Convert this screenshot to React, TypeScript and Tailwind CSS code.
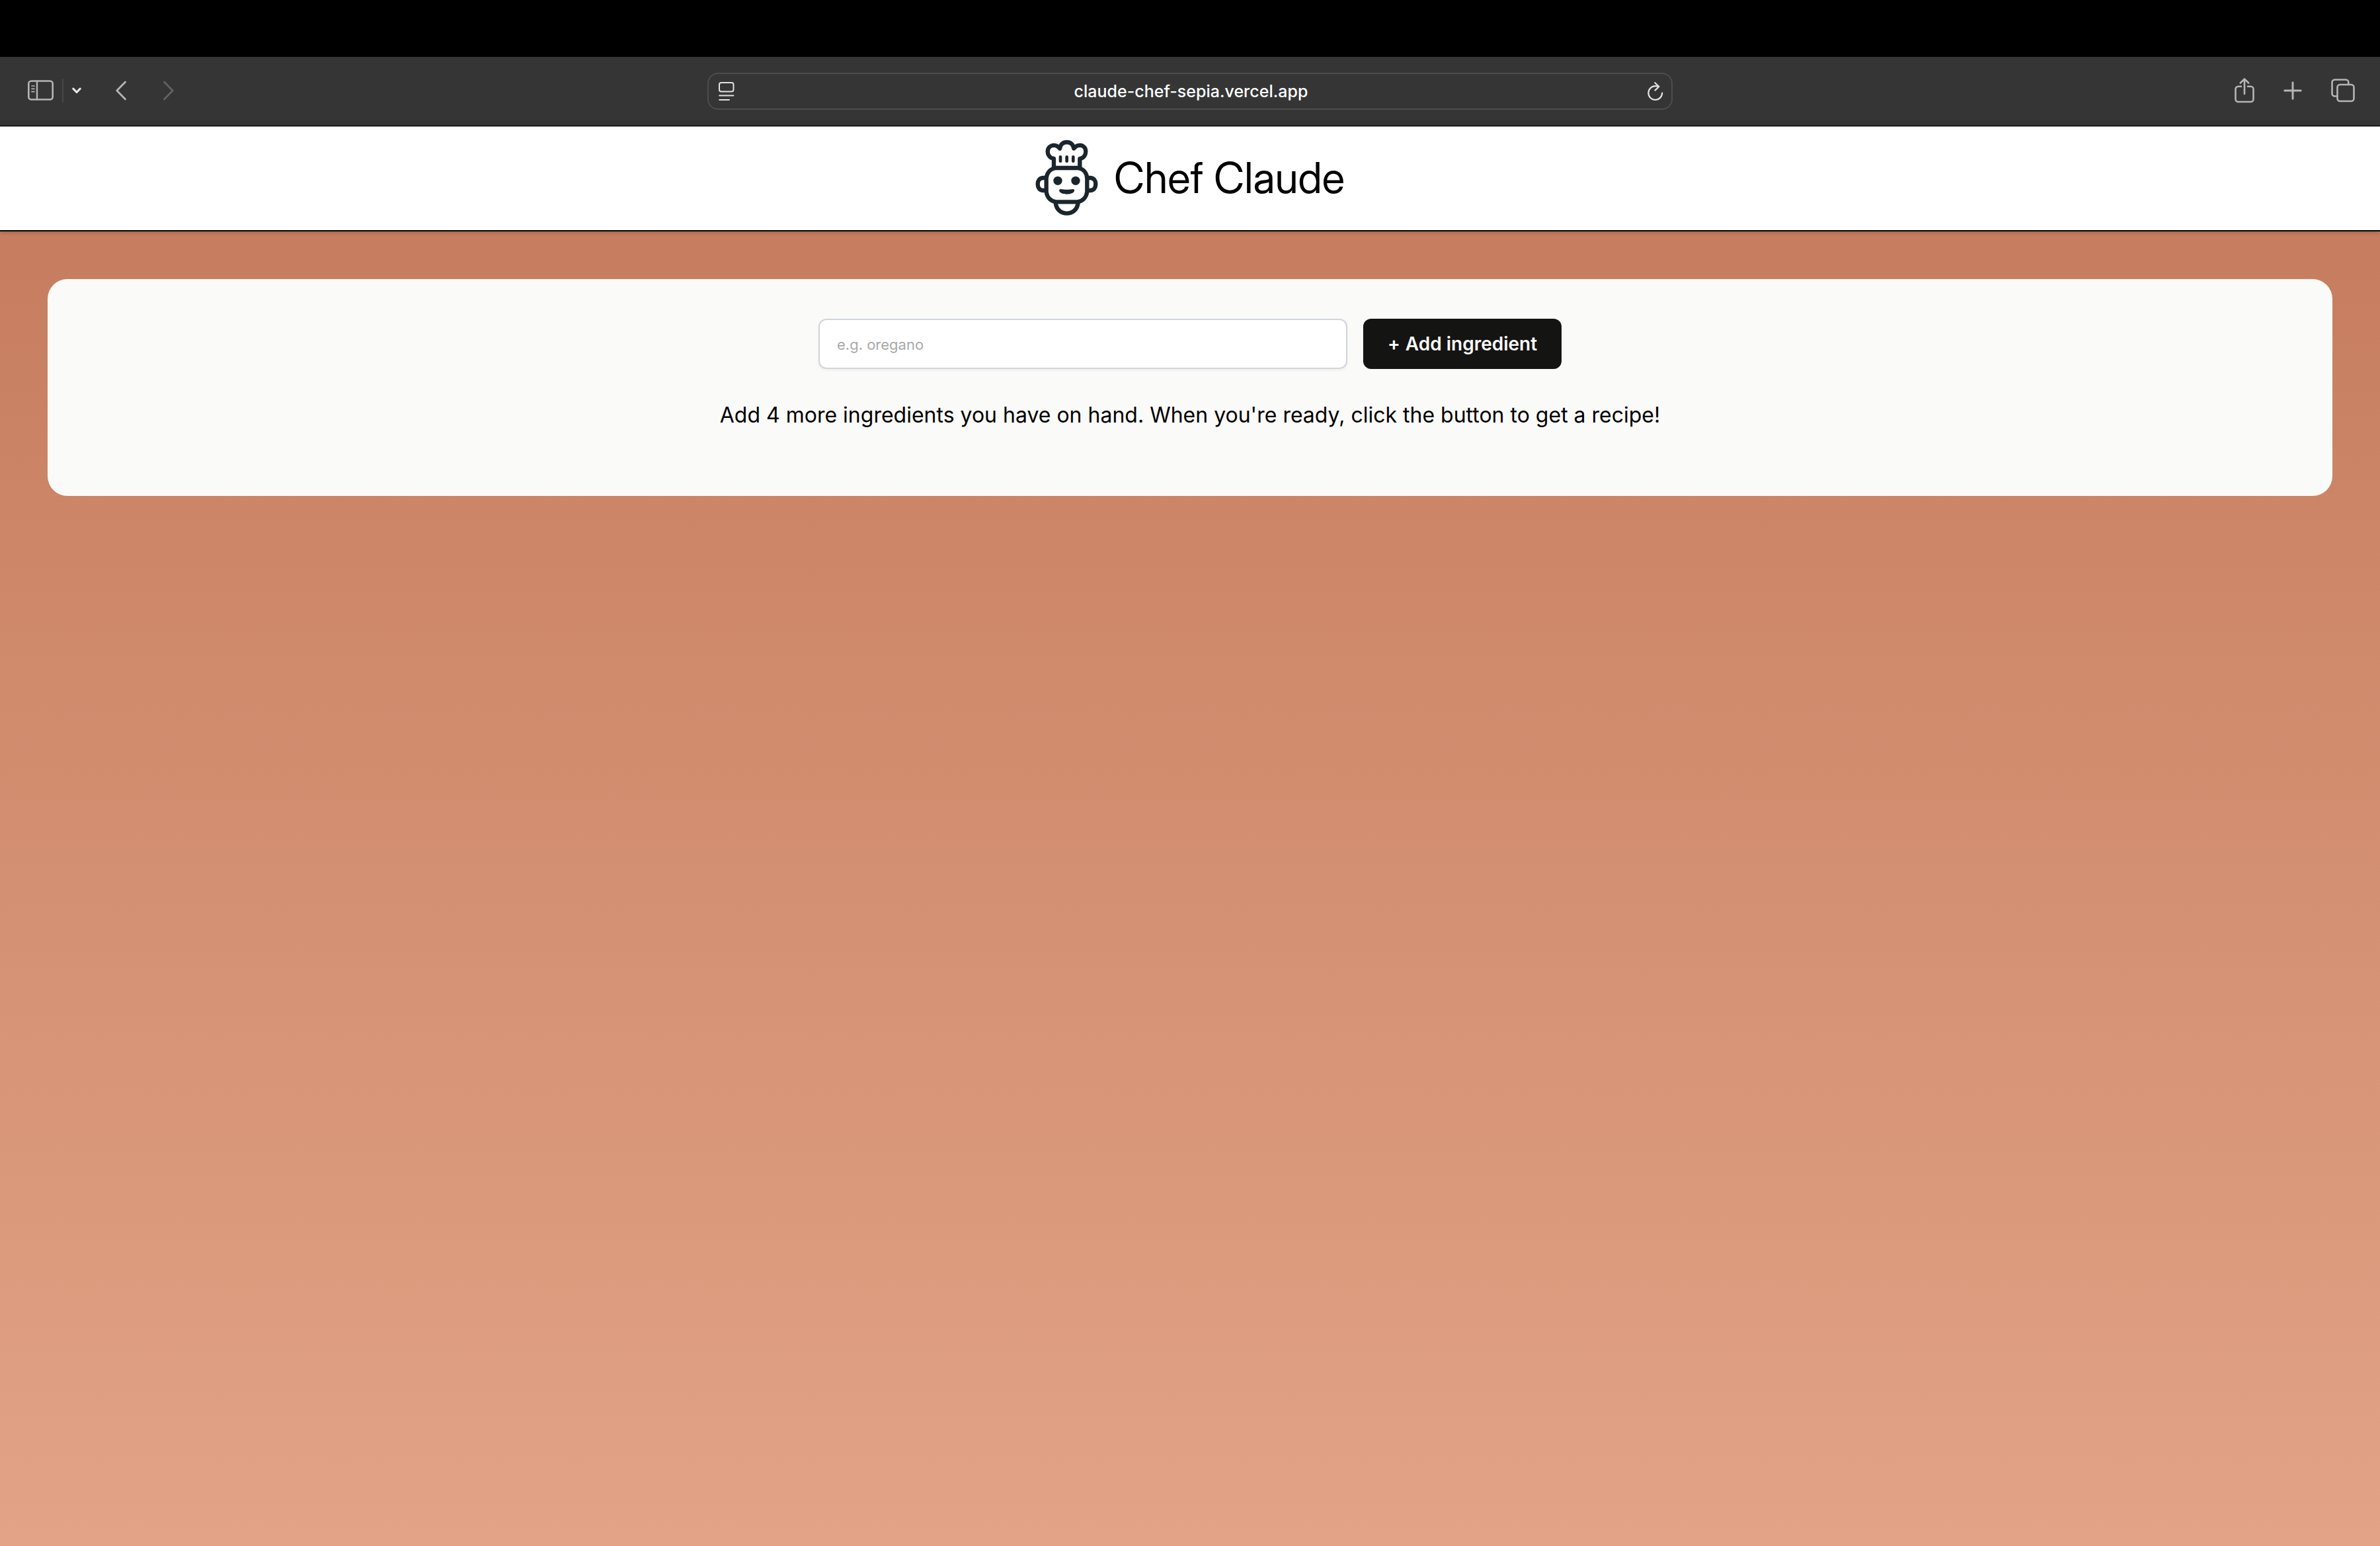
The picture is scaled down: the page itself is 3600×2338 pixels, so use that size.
import type { ReactNode } from "react";

function ToolButton({ label, children }: { label: string; children: ReactNode }) {
  return (
    <button type="button" aria-label={label} className="shrink-0 text-[#b5b5b5]">
      {children}
    </button>
  );
}

function SidebarIcon() {
  return (
    <svg className="h-8 w-10" viewBox="0 0 40 32" fill="none" stroke="currentColor" strokeLinecap="round">
      <rect x="1.3" y="1.5" width="36.4" height="28" rx="4" strokeWidth="2.6" />
      <path d="M14 2v27" strokeWidth="2.4" />
      <path d="M6 9h4M6 13.300h4M6 17.600h4" strokeWidth="1.700" />
    </svg>
  );
}

function ChevronDownIcon() {
  return (
    <svg className="h-3 w-4" viewBox="0 0 16 12" fill="none" stroke="#e4e4e4" strokeWidth="3.2" strokeLinecap="round" strokeLinejoin="round">
      <path d="M2.800 3.200L8 8.500l5.200-5.300" />
    </svg>
  );
}

function BackIcon() {
  return (
    <svg className="h-8 w-4" viewBox="0 0 16 32" fill="none" stroke="currentColor" strokeWidth="2.8" strokeLinecap="round" strokeLinejoin="round">
      <path d="M14.500 3L1.800 16l12.700 13" />
    </svg>
  );
}

function ForwardIcon() {
  return (
    <svg className="h-8 w-4" viewBox="0 0 16 32" fill="none" stroke="#626262" strokeWidth="2.8" strokeLinecap="round" strokeLinejoin="round">
      <path d="M1.500 3l12.700 13L1.500 29" />
    </svg>
  );
}

function ReaderIcon() {
  return (
    <svg className="h-7 w-6" viewBox="0 0 24 28" fill="none" stroke="#e2e2e2" strokeWidth="2" strokeLinecap="round">
      <rect x="1" y="1" width="21.500" height="13.500" rx="3" />
      <path d="M1.200 20.400h21.200M1.200 27h14.800" />
    </svg>
  );
}

function ReloadIcon() {
  return (
    <svg className="h-7 w-6" viewBox="0 0 24 28" fill="none" stroke="#e2e2e2" strokeWidth="2.2" strokeLinecap="round" strokeLinejoin="round">
      <path d="M22.200 16.500A10.400 10.400 0 1 1 11.800 6.200c1.800 0 3.600.2 5.200.6" />
      <path d="M11.300 1.200L17.300 7l-5.800 5.600" />
    </svg>
  );
}

function ShareIcon() {
  return (
    <svg className="h-10 w-[30px]" viewBox="0 0 30 40" fill="none" stroke="currentColor" strokeWidth="2.6" strokeLinecap="round" strokeLinejoin="round">
      <path d="M10 13.800H5.500a4 4 0 0 0-4 4V33a4 4 0 0 0 4 4h19a4 4 0 0 0 4-4V17.800a4 4 0 0 0-4-4H20" />
      <path d="M15 25V2.500M8.800 8.500L15 2.300l6.200 6.200" />
    </svg>
  );
}

function PlusIcon() {
  return (
    <svg className="size-7" viewBox="0 0 28 28" fill="none" stroke="currentColor" strokeWidth="3" strokeLinecap="round">
      <path d="M14 1.800v24.400M1.800 14h24.400" />
    </svg>
  );
}

function TabsIcon() {
  return (
    <svg className="size-9" viewBox="0 0 36 36" fill="none" stroke="currentColor" strokeWidth="2.6" strokeLinejoin="round">
      <path d="M26.300 8.500V5.500a4 4 0 0 0-4-4H5.500a4 4 0 0 0-4 4V22.500a4 4 0 0 0 4 4H9" />
      <rect x="9.500" y="9" width="25" height="25" rx="4" />
    </svg>
  );
}

function ChefLogo() {
  return (
    <svg className="h-[116px] w-[95px]" viewBox="50 63 285 348" fill="none" stroke="#1b262c" strokeWidth="19" strokeLinecap="round" strokeLinejoin="round" aria-hidden="true">
      <path d="M134 190V150C114 147 106 130 106 117C107 100 119 90 134 89C146 89 154 95 161 104C164 84 177 75 193 75C209 75 222 84 225 104C232 95 240 89 252 89C268 90 279 101 279 117C279 132 270 147 252 150V190" />
      <path d="M164 142v19M193 142v19M222 142v19" strokeWidth="14" />
      <path d="M142 192H244C268 196 284 214 285 240V300C282 326 264 342 242 346H144C120 342 103 326 100 300V240C102 214 118 196 142 192Z" />
      <path d="M97 237H84C69 238 61 250 61 265C61 281 69 293 84 294H97M288 237H301C316 238 324 250 324 265C324 281 316 293 301 294H288" />
      <path d="M142 350C145 380 166 398 193 398C220 398 241 380 244 350" />
      <g fill="#1b262c" stroke="none">
        <circle cx="152" cy="250" r="20" />
        <circle cx="233" cy="250" r="20" />
        <path d="M166 288C178 291 208 291 220 288C226 287 229 292 227 297C222 307 208 311 193 311C178 311 164 307 159 297C157 292 160 287 166 288Z" />
      </g>
    </svg>
  );
}

export default function App() {
  return (
    <div className="flex min-h-screen flex-col bg-black pt-[86px] font-[Inter,sans-serif] text-black">
      <nav aria-label="Browser toolbar" className="grid h-[105px] shrink-0 grid-cols-[1fr_1460px_1fr] items-center border-b border-black bg-[#353535]">
        <div className="flex items-center pb-0.5 pl-[42px]">
          <ToolButton label="Show sidebar">
            <SidebarIcon />
          </ToolButton>
          <span className="ml-3 h-9 w-0.5 bg-[#484848]" />
          <span className="ml-3 flex">
            <ToolButton label="Tab groups">
              <ChevronDownIcon />
            </ToolButton>
          </span>
          <span className="ml-[51px] flex gap-14">
            <ToolButton label="Back">
              <BackIcon />
            </ToolButton>
            <ToolButton label="Forward">
              <ForwardIcon />
            </ToolButton>
          </span>
        </div>
        <div className="flex h-14 items-center rounded-2xl border-2 border-[#4d4d4d] pr-3 pl-[15px]">
          <ToolButton label="Reader view">
            <ReaderIcon />
          </ToolButton>
          <input
            type="text"
            aria-label="Address"
            defaultValue="claude-chef-sepia.vercel.app"
            className="min-w-0 flex-1 bg-transparent pt-0.5 text-center text-[25px] font-medium text-white outline-none"
          />
          <ToolButton label="Reload">
            <ReloadIcon />
          </ToolButton>
        </div>
        <div className="flex items-center justify-end gap-11 pr-[38px] pb-0.5">
          <ToolButton label="Share">
            <ShareIcon />
          </ToolButton>
          <ToolButton label="New tab">
            <PlusIcon />
          </ToolButton>
          <ToolButton label="Tab overview">
            <TabsIcon />
          </ToolButton>
        </div>
      </nav>
      <div className="flex flex-1 flex-col bg-linear-to-b from-[#c47a5c] to-[#e2a386]">
        <header className="flex h-[159px] shrink-0 items-center justify-center gap-6 border-t border-b-2 border-t-[#b5b5b5] border-b-black bg-white pb-0.5 shadow-[0_2px_6px_rgba(0,0,0,0.2)]">
          <ChefLogo />
          <h1 className="font-['Inter_Display',Inter,sans-serif] text-[64px] leading-none">Chef Claude</h1>
        </header>
        <main className="m-[72px] flex flex-col items-center gap-[50px] rounded-[30px] bg-[#fafaf8] px-6 pt-[60px] pb-[102px]">
          <form className="flex gap-6" onSubmit={(event) => event.preventDefault()}>
            <input
              type="text"
              name="ingredient"
              aria-label="Add ingredient"
              placeholder="e.g. oregano"
              className="h-[76px] w-[800px] rounded-xl border-2 border-[#d1d5db] bg-white px-[26px] pt-0.5 text-[22px] shadow-[0_2px_4px_rgba(0,0,0,0.05)] placeholder:text-[#a9a9a9]"
            />
            <button type="submit" className="flex h-[76px] w-[300px] items-center justify-center gap-2 rounded-xl bg-[#141413] text-[28px] font-semibold text-[#fafaf8]">
              <span>+</span>
              <span>Add ingredient</span>
            </button>
          </form>
          <p className="text-[32px] leading-10">
            Add 4 more ingredients you have on hand. When you're ready, click the button to get a recipe!
          </p>
        </main>
      </div>
    </div>
  );
}
